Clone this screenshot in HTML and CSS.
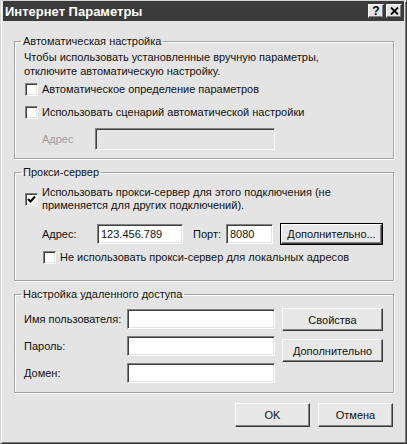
FILE: index.html
```html
<!DOCTYPE html>
<html lang="ru">
<head>
    <meta charset="UTF-8">
    <title>Интернет Параметры</title>
    <link rel="stylesheet" href="styles.css">
</head>
<body>
    <div class="window">
        <div class="titlebar">
            <span class="title">Интернет Параметры</span>
            <div class="title-buttons">
                <span class="tb-btn">?</span>
                <span class="tb-btn">
                    <svg width="9" height="8" viewBox="0 0 9 8"><path d="M1 0.5 L8 7.5 M8 0.5 L1 7.5" stroke="#000" stroke-width="1.8" fill="none"/></svg>
                </span>
            </div>
        </div>

        <div class="dialog-body">
            <!-- auto config -->
            <fieldset class="group group-auto">
                <legend>Автоматическая настройка</legend>
                <p class="note">Чтобы использовать установленные вручную параметры,<br>отключите автоматическую настройку.</p>
                <label class="check check-first"><span class="box"></span>Автоматическое определение параметров</label>
                <label class="check check-second"><span class="box"></span>Использовать сценарий автоматической настройки</label>
                <div class="field-row disabled">
                    <span class="field-label">Адрес</span>
                    <span class="field field-script"></span>
                </div>
            </fieldset>

            <!-- proxy -->
            <fieldset class="group group-proxy">
                <legend>Прокси-сервер</legend>
                <label class="check check-proxy">
                    <span class="box">
                        <svg width="9" height="9" viewBox="0 0 9 9"><path d="M1 4 L3.5 6.5 L8 1.5" stroke="#000" stroke-width="2" fill="none"/></svg>
                    </span>
                    <span>Использовать прокси-сервер для этого подключения (не<br>применяется для других подключений).</span>
                </label>
                <div class="field-row proxy-row">
                    <span class="field-label">Адрес:</span>
                    <span class="field field-addr">123.456.789</span>
                    <span class="port-label">Порт:</span>
                    <span class="field field-port">8080</span>
                    <button class="btn btn-default btn-side">Дополнительно...</button>
                </div>
                <label class="check check-local"><span class="box"></span>Не использовать прокси-сервер для локальных адресов</label>
            </fieldset>

            <!-- dial-up -->
            <fieldset class="group group-dialup">
                <legend>Настройка удаленного доступа</legend>
                <div class="dialup">
                    <div class="dialup-fields">
                        <div class="cred-row"><span class="cred-label">Имя пользователя:</span><span class="field field-cred"></span></div>
                        <div class="cred-row"><span class="cred-label">Пароль:</span><span class="field field-cred"></span></div>
                        <div class="cred-row cred-last"><span class="cred-label">Домен:</span><span class="field field-cred"></span></div>
                    </div>
                    <div class="dialup-buttons">
                        <button class="btn btn-side">Свойства</button>
                        <button class="btn btn-side">Дополнительно</button>
                    </div>
                </div>
            </fieldset>

            <div class="actions">
                <button class="btn btn-action">OK</button>
                <button class="btn btn-action">Отмена</button>
            </div>
        </div>
    </div>
</body>
</html>
```

FILE: styles.css
```css
* {
    margin: 0;
    padding: 0;
    box-sizing: border-box;
}

body {
    background: #e4e4e4;
    font-family: 'Liberation Sans', Arial, sans-serif;
    font-size: 11px;
    color: #111;
    overflow: hidden;
}

.window {
    width: 407px;
    height: 444px;
    background: #e4e4e4;
    border: 1px solid;
    border-color: #d4d4d4 #3a3a3a #3a3a3a #d4d4d4;
    box-shadow: inset 1px 1px 0 #fff, inset -1px -1px 0 #7c7c7c;
    padding: 0 2px 2px 2px;
}

.titlebar {
    height: 20px;
    background: #3b3b3b;
    display: flex;
    align-items: center;
    justify-content: space-between;
    padding: 0 2px 0 2px;
}

.title {
    color: #fff;
    font-weight: bold;
    font-size: 13px;
    padding-top: 1px;
}

.title-buttons {
    display: flex;
    gap: 2px;
}

.tb-btn {
    width: 16px;
    height: 14px;
    background: #e4e4e4;
    border: 1px solid;
    border-color: #fff #3a3a3a #3a3a3a #fff;
    box-shadow: inset -1px -1px 0 #808080;
    display: flex;
    align-items: center;
    justify-content: center;
    font-weight: bold;
    font-size: 12px;
    line-height: 1;
    color: #000;
}

.dialog-body {
    padding: 13px 10px 0 11px;
}

/* group boxes */
.group {
    border: 1px solid #a2a2a2;
    box-shadow: inset 1px 1px 0 #fff, 1px 1px 0 #fff;
    padding: 0 8px 8px 9px;
    width: 380px;
}

.group legend {
    margin-left: -3px;
    padding: 0 2px;
    line-height: 14px;
}

.group-proxy,
.group-dialup {
    margin-top: 6px;
}

.group-proxy {
    padding-bottom: 14px;
}

.note {
    line-height: 14px;
    margin-top: 2px;
}

/* check boxes */
.check {
    display: flex;
    align-items: center;
    gap: 4px;
    height: 18px;
    padding-left: 1px;
}

.check-first {
    margin-top: 2px;
}

.check-second {
    margin-top: 5px;
}

.check-proxy {
    height: auto;
    line-height: 13px;
    margin-top: 7px;
}

.check-local {
    margin-top: 4px;
    padding-left: 19px;
}

.box {
    width: 13px;
    height: 13px;
    flex: none;
    background: #fff;
    border: 1px solid;
    border-color: #808080 #fff #fff #808080;
    box-shadow: inset 1px 1px 0 #404040, inset -1px -1px 0 #e4e4e4;
    display: flex;
    align-items: center;
    justify-content: center;
}

/* edit fields */
.field {
    display: block;
    height: 20px;
    background: #fff;
    border: 1px solid;
    border-color: #808080 #fff #fff #808080;
    box-shadow: inset 1px 1px 0 #404040, inset -1px -1px 0 #e4e4e4;
    padding: 0 3px;
    line-height: 18px;
    flex: none;
}

.field-row {
    display: flex;
    align-items: center;
}

.field-label {
    width: 71px;
    padding-left: 18px;
    flex: none;
}

.disabled {
    margin-top: 7px;
}

.disabled .field-label {
    color: #9c9c9c;
}

.field-script {
    width: 180px;
    height: 22px;
    background: #e4e4e4;
}

.proxy-row {
    margin-top: 12px;
}

.proxy-row .field-label {
    width: 73px;
}

.field-addr {
    width: 86px;
}

.port-label {
    margin: 0 5px 0 10px;
}

.field-port {
    width: 47px;
}

/* buttons */
.btn {
    font-family: inherit;
    font-size: 11px;
    color: #111;
    background: #e8e8e8;
    border: 1px solid;
    border-color: #fff #3a3a3a #3a3a3a #fff;
    box-shadow: inset -1px -1px 0 #808080;
    flex: none;
}

.btn-side {
    width: 101px;
    height: 23px;
}

.proxy-row .btn-side {
    margin-left: 8px;
    height: 20px;
}

.btn-default {
    outline: 1px solid #000;
    outline-offset: 0;
    border-color: #fff #404040 #404040 #fff;
}

/* dial-up settings */
.dialup {
    display: flex;
    justify-content: space-between;
    margin-top: 7px;
    padding-bottom: 1px;
}

.dialup-fields {
    display: flex;
    flex-direction: column;
    gap: 7px;
    padding-top: 1px;
}

.cred-row {
    display: flex;
    align-items: center;
}

.cred-label {
    width: 103px;
}

.field-cred {
    width: 148px;
}

.dialup-buttons {
    display: flex;
    flex-direction: column;
    gap: 8px;
    padding-right: 2px;
}

.actions {
    display: flex;
    justify-content: flex-end;
    gap: 8px;
    margin-top: 10px;
    padding-right: 1px;
}

.btn-action {
    width: 75px;
    height: 24px;
}
```
